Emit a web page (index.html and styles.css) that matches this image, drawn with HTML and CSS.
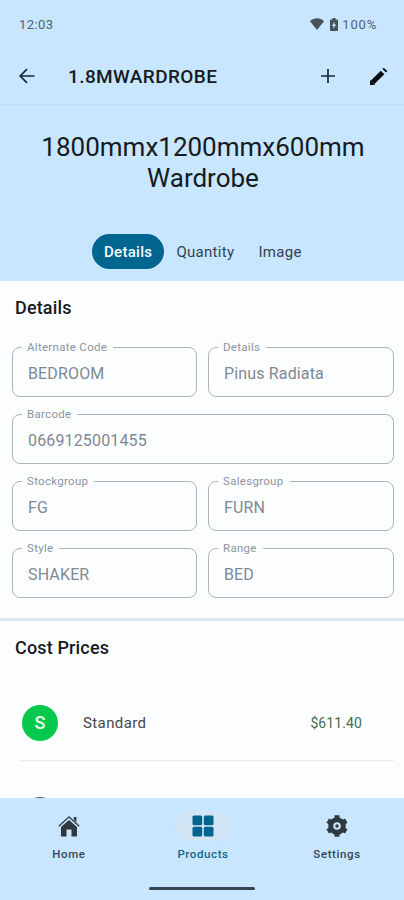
FILE: index.html
```html
<!DOCTYPE html>
<html lang="en">
<head>
    <meta charset="UTF-8">
    <meta name="viewport" content="width=device-width, initial-scale=1.0">
    <title>1.8MWARDROBE</title>
    <link rel="stylesheet" href="styles.css">
</head>
<body>
    <div class="status-bar">
        <span class="clock">12:03</span>
        <svg class="wifi" width="14" height="12" viewBox="0 0 14 12"><path d="M0 3.200C4 -.6 10 -.6 14 3.200L7 12z"/></svg>
        <svg class="battery" width="8" height="13" viewBox="0 0 8 13"><path fill-rule="evenodd" d="M2.500 0h3v1.500H7a1 1 0 0 1 1 1V12a1 1 0 0 1-1 1H1a1 1 0 0 1-1-1V2.500a1 1 0 0 1 1-1h1.500zM4.500 3.500L2 8h1.500v3L6 6.500H4.500z"/></svg>
        <span class="percent">100%</span>
    </div>

    <header class="app-bar">
        <svg class="back" width="16" height="16" viewBox="0 0 16 16"><path d="M15.500 8H1.500M8 1.200L1.200 8L8 14.800"/></svg>
        <h1>1.8MWARDROBE</h1>
        <svg class="add" width="14" height="14" viewBox="0 0 14 14"><path d="M7 0v14M0 7h14"/></svg>
        <svg class="edit" width="18" height="18" viewBox="0 0 18 18"><path class="shaft" d="M2.400 15.600L12.600 5.400"/><path class="tip" d="M14.200 3.800L15.600 2.400"/><path d="M0 13.500V18h4.500z"/></svg>
    </header>

    <section class="hero">
        <h2>1800mmx1200mmx600mm<br>Wardrobe</h2>
        <div class="tabs">
            <button class="tab active">Details</button>
            <button class="tab">Quantity</button>
            <button class="tab">Image</button>
        </div>
    </section>

    <main>
        <section class="details">
            <h3>Details</h3>
            <div class="fields">
                <fieldset><legend>Alternate Code</legend>BEDROOM</fieldset>
                <fieldset><legend>Details</legend>Pinus Radiata</fieldset>
                <fieldset class="wide"><legend>Barcode</legend>0669125001455</fieldset>
                <fieldset><legend>Stockgroup</legend>FG</fieldset>
                <fieldset><legend>Salesgroup</legend>FURN</fieldset>
                <fieldset><legend>Style</legend>SHAKER</fieldset>
                <fieldset><legend>Range</legend>BED</fieldset>
            </div>
        </section>

        <section class="prices">
            <h3>Cost Prices</h3>
            <div class="price-row">
                <span class="avatar">S</span>
                <span class="name">Standard</span>
                <span class="amount">$611.40</span>
            </div>
            <div class="price-row">
                <span class="avatar dark"></span>
            </div>
        </section>
    </main>

    <nav class="bottom-nav">
        <div class="nav-items">
            <a class="nav-item">
                <span class="nav-icon"><svg width="22" height="22" viewBox="0 0 22 22"><path d="M11 5L19 12V21.500h-5.500v-7h-5v7H3V12z"/><path d="M15.800 2h2.600v5.200l-2.600-2.400z"/><path class="roof" d="M.8 11.200L11 1.800l10.200 9.400"/></svg></span>
                <span>Home</span>
            </a>
            <a class="nav-item current">
                <span class="nav-icon"><svg width="22" height="22" viewBox="0 0 22 22"><rect x="0.500" y="0.500" width="9.700" height="9.700" rx="1.500"/><rect x="11.800" y="0.500" width="9.700" height="9.700" rx="1.500"/><rect x="0.500" y="11.800" width="9.700" height="9.700" rx="1.500"/><rect x="11.800" y="11.800" width="9.700" height="9.700" rx="1.500"/></svg></span>
                <span>Products</span>
            </a>
            <a class="nav-item">
                <span class="nav-icon"><svg width="22" height="22" viewBox="0 0 22 22"><circle class="ring" cx="11" cy="11" r="6.300"/><g class="teeth"><path d="M11 .3v4.200M11 17.500v4.200"/><path d="M11 .3v4.200M11 17.500v4.200" transform="rotate(60 11 11)"/><path d="M11 .3v4.200M11 17.500v4.200" transform="rotate(120 11 11)"/></g><circle cx="11" cy="11" r="1.700"/></svg></span>
                <span>Settings</span>
            </a>
        </div>
        <div class="home-indicator"></div>
    </nav>
</body>
</html>
```
FILE: styles.css
```css
* {
    box-sizing: border-box;
}

body {
    margin: 0;
    height: 900px;
    display: flex;
    flex-direction: column;
    overflow: hidden;
    background: #fcfdff;
    color: #151b20;
    font-family: Roboto, "Liberation Sans", sans-serif;
}

h1, h2, h3 {
    margin: 0;
    font-weight: 500;
}

svg {
    display: block;
    flex: none;
}

.status-bar {
    height: 48px;
    padding: 0 27px 0 19px;
    display: flex;
    align-items: center;
    background: #c8e6ff;
    color: #53626e;
    fill: #46535d;
    font-size: 13px;
    letter-spacing: 0.4px;
}

.clock {
    flex: 1;
}

.percent {
    letter-spacing: 0.8px;
}

.battery {
    margin: 0 4px 0 6px;
}

.app-bar {
    height: 57px;
    padding: 0 16px 0 19px;
    display: flex;
    align-items: center;
    background: #c8e6ff;
    border-bottom: 1px solid #c0dff7;
}

.app-bar h1 {
    flex: 1;
    margin-left: 33px;
    font-size: 19px;
    letter-spacing: 0.4px;
}

.back,
.add {
    fill: none;
    stroke: #1b2832;
    stroke-width: 1.7;
}

.edit {
    margin-left: 35px;
    fill: #080d12;
    stroke: #080d12;
}

.shaft,
.tip {
    stroke-width: 5;
}

.hero {
    height: 176px;
    padding-top: 27px;
    background: #c8e6ff;
    text-align: center;
}

.hero h2 {
    padding-left: 2px;
    font-size: 26px;
    font-weight: 400;
    line-height: 31px;
}

.tabs {
    margin: 40px 0 0 92px;
    display: flex;
}

.tab {
    height: 35px;
    padding: 0 12px;
    border: none;
    border-radius: 18px;
    background: none;
    color: #32424f;
    font-family: inherit;
    font-size: 15px;
    letter-spacing: 0.3px;
}

.tab.active {
    background: #00658f;
    color: #f4faff;
    font-weight: 500;
}

main {
    flex: 1;
    min-height: 0;
    overflow: hidden;
}

.details {
    height: 340px;
    padding: 16px 10px 0 12px;
    border-bottom: 3px solid #d9e7f5;
}

h3 {
    padding-left: 3px;
    font-size: 18px;
    line-height: 22px;
    letter-spacing: 0.15px;
}

.fields {
    margin-top: 23px;
    display: grid;
    grid-template-columns: 185px 186px;
    gap: 12px 11px;
}

fieldset {
    height: 55px;
    min-width: 0;
    margin: 0;
    padding: 11px 0 0 15px;
    border: 1px solid #adb5bb;
    border-radius: 8px;
    color: #7e8993;
    font-size: 16px;
    line-height: 20px;
    letter-spacing: 0.15px;
}

.wide {
    grid-column: span 2;
}

legend {
    margin-left: -6px;
    padding: 0 6px 0 5px;
    color: #8b959e;
    font-size: 11.5px;
    line-height: 11px;
    letter-spacing: 0.3px;
}

.prices {
    padding: 16px 10px 0 12px;
}

.price-row {
    height: 76px;
    margin: 16px 0 0 9px;
    padding-right: 32px;
    display: flex;
    align-items: center;
    border-bottom: 1px solid #e8ebef;
}

.prices h3 + .price-row {
    margin-top: 26px;
}

.avatar {
    width: 36px;
    height: 36px;
    margin: 0 25px 0 1px;
    display: flex;
    align-items: center;
    justify-content: center;
    border-radius: 50%;
    background: #05c94c;
    color: #e9ffec;
    font-size: 18px;
    font-weight: 500;
}

.avatar.dark {
    background: #55534e;
}

.name {
    flex: 1;
    color: #45484c;
    font-size: 15px;
    letter-spacing: 0.4px;
}

.amount {
    color: #47704b;
    font-size: 14px;
    letter-spacing: 0.1px;
}

.bottom-nav {
    height: 102px;
    padding-top: 13px;
    background: #c8e6ff;
}

.nav-items {
    padding-left: 2px;
    display: flex;
}

.nav-item {
    flex: 1;
    display: flex;
    flex-direction: column;
    align-items: center;
    gap: 5px;
    color: #344653;
    fill: #2e3940;
    font-size: 11.5px;
    font-weight: 500;
    line-height: 16px;
    letter-spacing: 0.6px;
}

.nav-icon {
    width: 56px;
    height: 30px;
    display: flex;
    align-items: center;
    justify-content: center;
    border-radius: 15px;
}

.current {
    color: #12668d;
    fill: #00658f;
}

.current .nav-icon {
    background: #d2e5f5;
}

.roof,
.ring,
.teeth {
    fill: none;
    stroke: #2e3940;
}

.roof {
    stroke-width: 1.3;
}

.ring {
    stroke-width: 5;
}

.teeth {
    stroke-width: 5;
}

.home-indicator {
    width: 106px;
    height: 3px;
    margin: 25px auto 0;
    border-radius: 2px;
    background: #354451;
}
```
